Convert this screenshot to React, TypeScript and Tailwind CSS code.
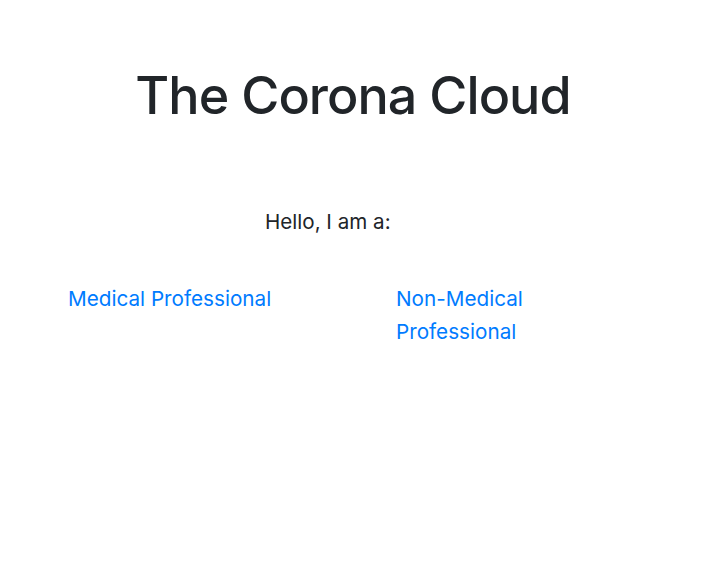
const App = () => {
  return (
    <div className="min-h-[573px] bg-white text-[#212529] font-['Inter','Liberation_Sans',sans-serif]">
      <h1 className="pt-[65px] pr-[14px] text-center text-[52px] font-medium leading-[1.2] tracking-[-0.95px]">
        The Corona Cloud
      </h1>
      <p className="mt-[79px] pl-[265px] text-[20.6px] leading-[1.6]">Hello, I am a:</p>
      <div className="mt-[43px] flex text-[20.7px] leading-[33px] text-[#007bff]">
        <a href="#" className="ml-[68px] w-[328px]">Medical Professional</a>
        <a href="#" className="w-[180px]">Non-Medical Professional</a>
      </div>
    </div>
  )
}

export default App
